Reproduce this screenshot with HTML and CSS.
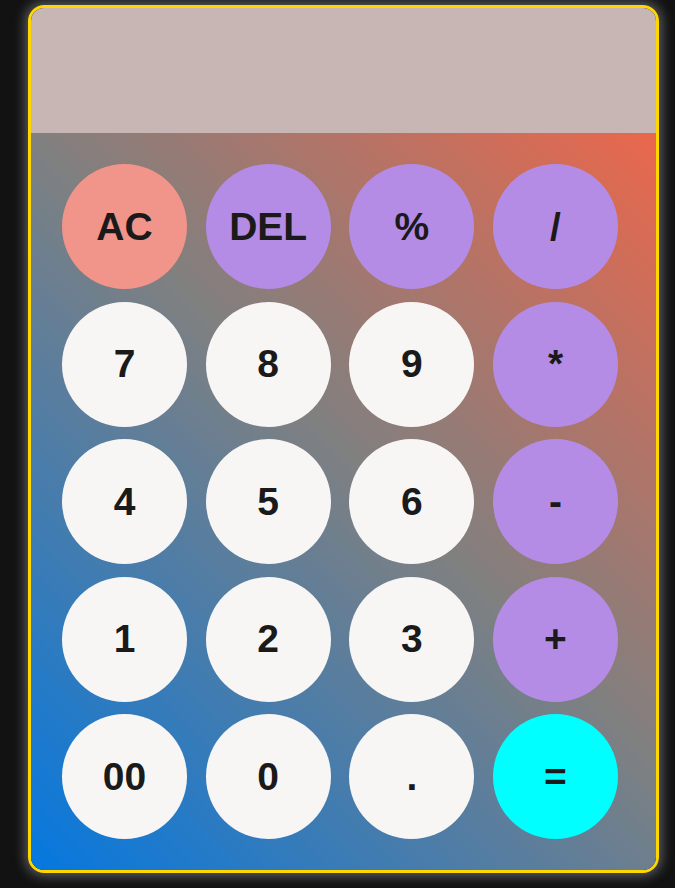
FILE: index.html
```html
<!DOCTYPE html>
<html lang="en">
<head>
<meta charset="UTF-8">
<title>Calculator</title>
<link rel="stylesheet" href="styles.css">
</head>
<body>
<div class="calculator">
  <div class="display"></div>
  <div class="keypad">
    <button class="key key-clear">AC</button>
    <button class="key key-op">DEL</button>
    <button class="key key-op">%</button>
    <button class="key key-op">/</button>
    <button class="key">7</button>
    <button class="key">8</button>
    <button class="key">9</button>
    <button class="key key-op">*</button>
    <button class="key">4</button>
    <button class="key">5</button>
    <button class="key">6</button>
    <button class="key key-op">-</button>
    <button class="key">1</button>
    <button class="key">2</button>
    <button class="key">3</button>
    <button class="key key-op">+</button>
    <button class="key">00</button>
    <button class="key">0</button>
    <button class="key">.</button>
    <button class="key key-equal">=</button>
  </div>
</div>
</body>
</html>
```
FILE: styles.css
```css
html, body {
  margin: 0;
  padding: 0;
  background: #121212;
}
body {
  width: 675px;
  height: 888px;
  padding: 5px 0 0 28px;
  box-sizing: border-box;
  font-family: "Liberation Sans", Arial, sans-serif;
}
.calculator {
  width: 631px;
  height: 868px;
  box-sizing: border-box;
  border: 3px solid #ffd700;
  border-radius: 16px;
  overflow: hidden;
  display: flex;
  flex-direction: column;
  box-shadow: 0 0 12px 3px rgba(180, 185, 195, 0.45);
}
.display {
  height: 125px;
  background: #c8b6b5;
  flex: none;
}
.keypad {
  flex: 1;
  background: linear-gradient(45deg, #0478e0 0%, #808080 54%, #ea674c 100%);
  padding: 31px 38px 31px 31px;
  display: grid;
  grid-template-columns: repeat(4, 125px);
  grid-auto-rows: 125px;
  column-gap: 18.67px;
  row-gap: 12.5px;
}
.key {
  width: 125px;
  height: 125px;
  border: none;
  border-radius: 50%;
  background: #f8f6f5;
  color: #1a1a1a;
  font-family: "Liberation Sans", Arial, sans-serif;
  font-weight: bold;
  font-size: 39px;
  padding: 0;
  margin: 0;
  cursor: pointer;
}
.key-clear {
  background: #f1958a;
}
.key-op {
  background: #b48ce6;
}
.key-equal {
  background: #00ffff;
}
```
